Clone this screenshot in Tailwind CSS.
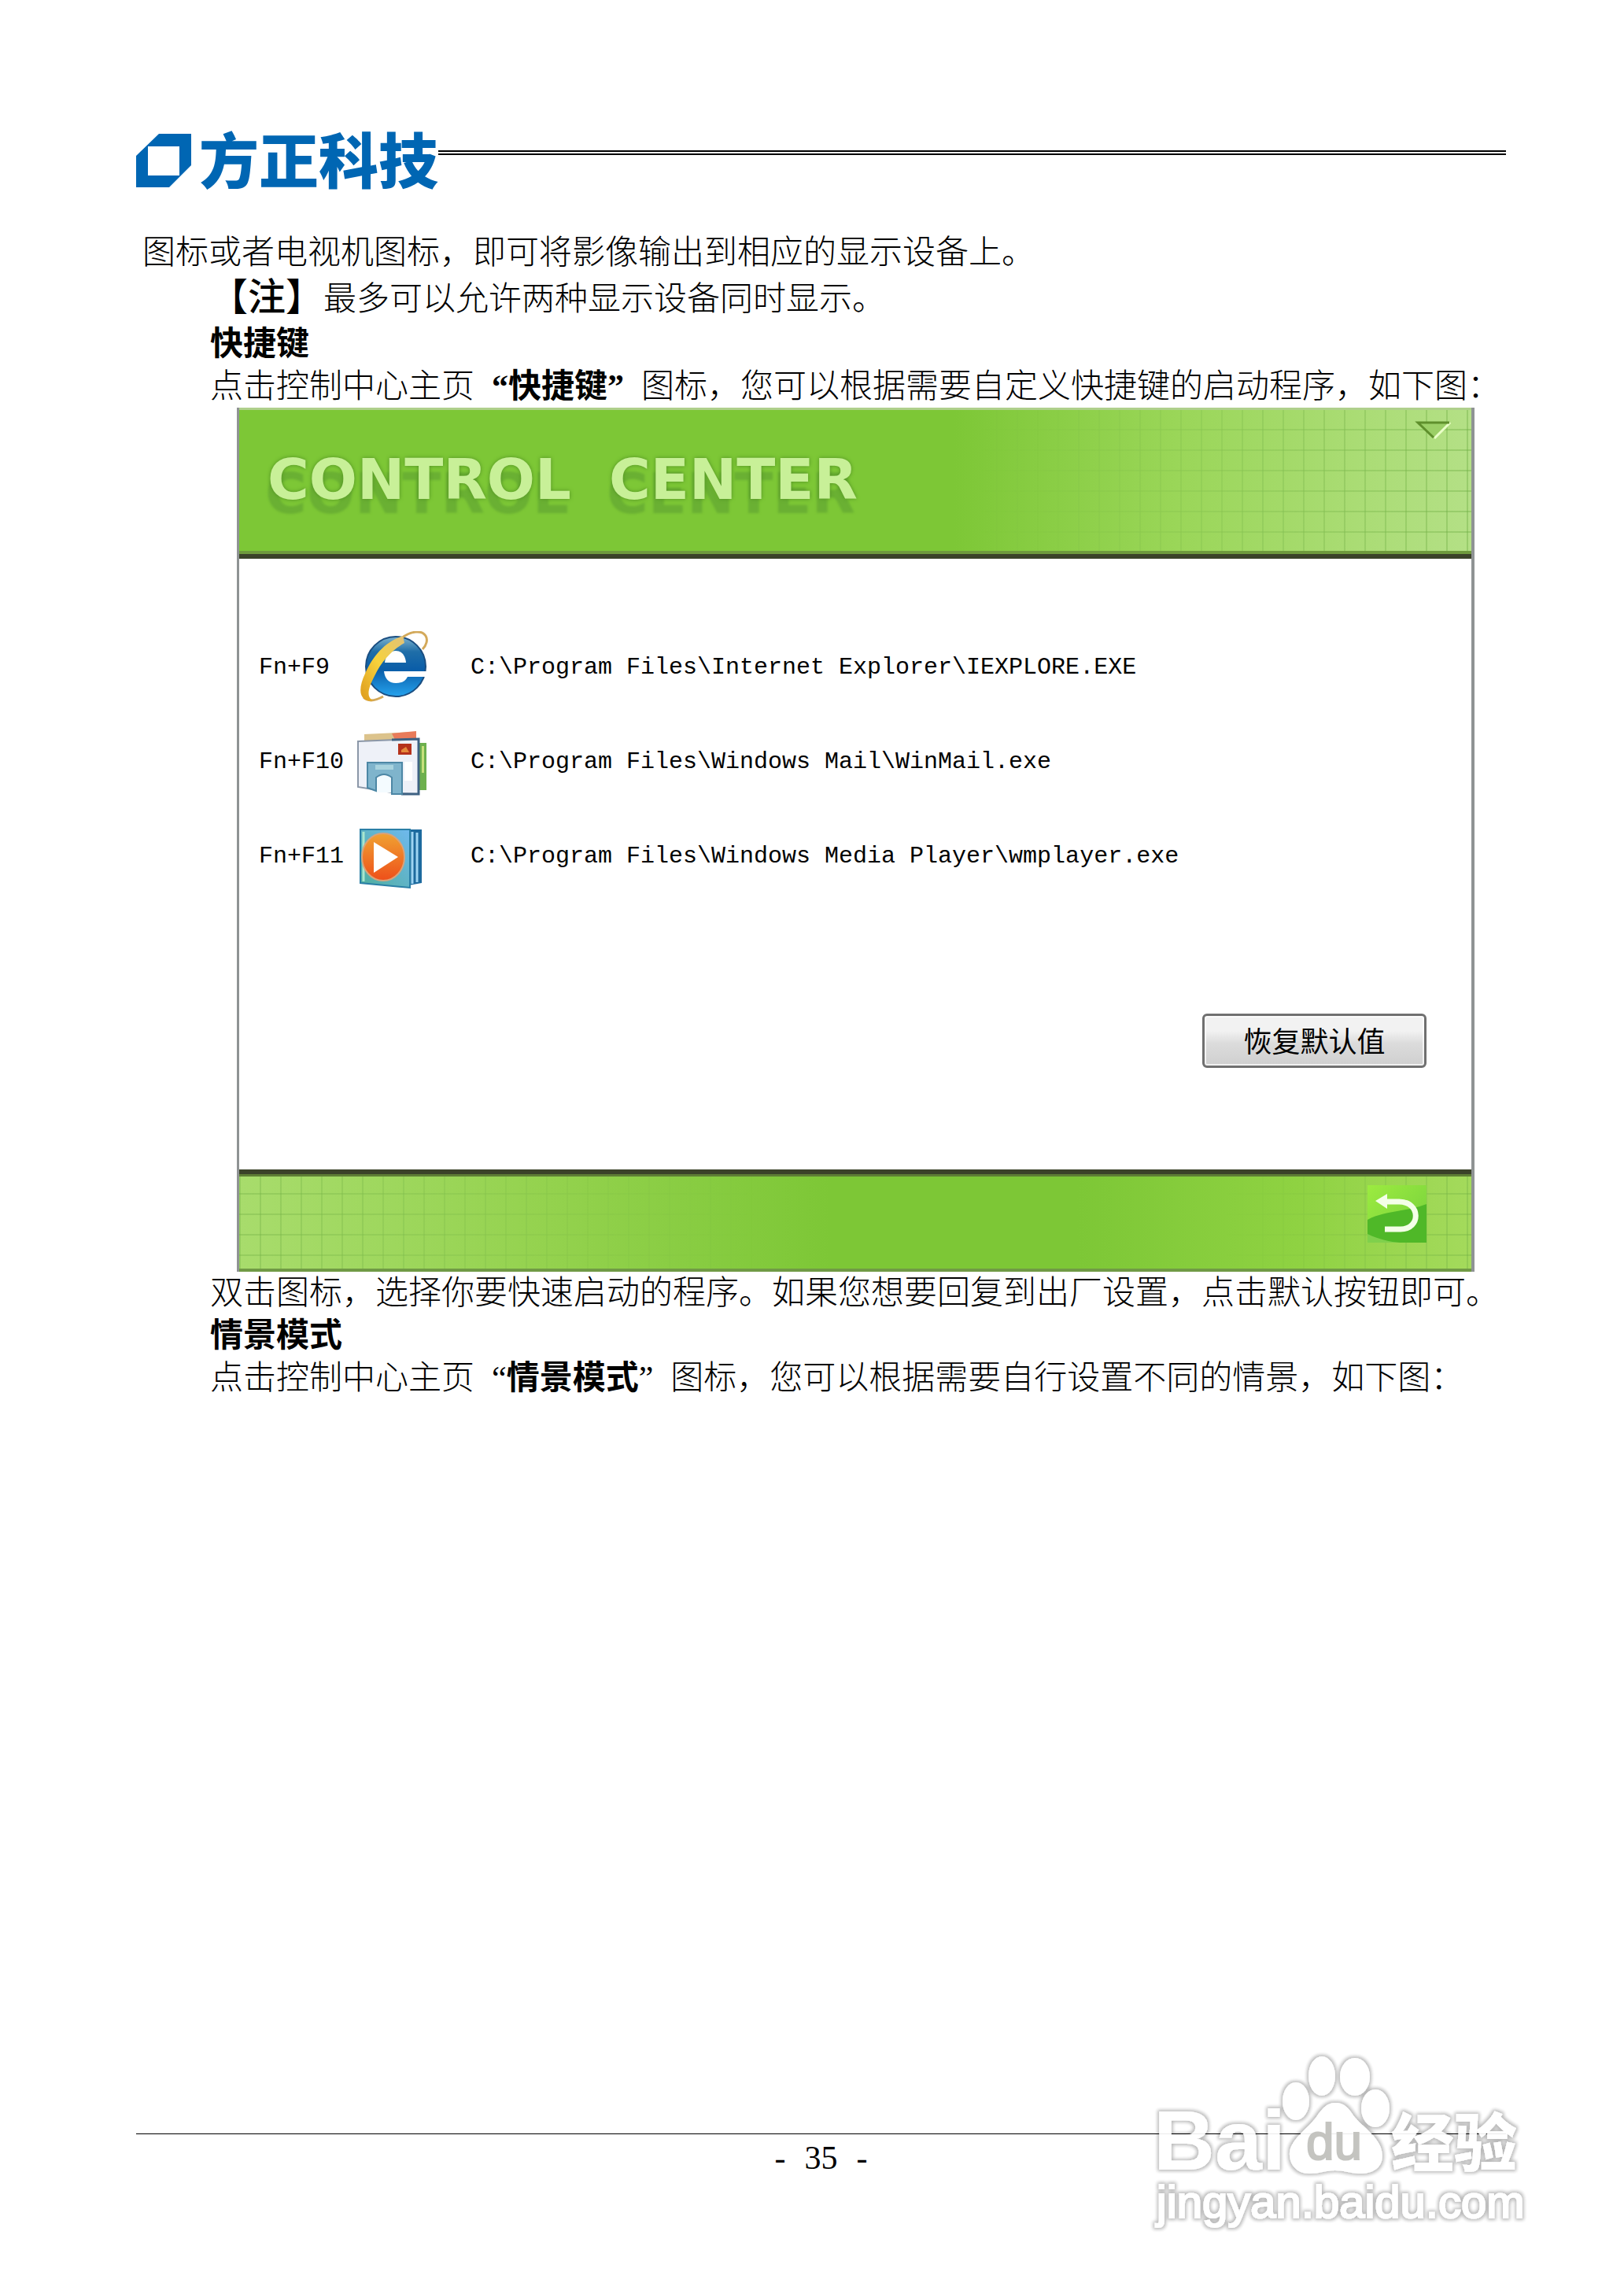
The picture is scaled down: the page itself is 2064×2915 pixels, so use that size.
<!DOCTYPE html>
<html lang="zh-CN">
<head>
    <meta charset="UTF-8">
    <meta name="viewport" content="width=device-width, initial-scale=1.0">
    <title>方正科技 - 快捷键</title>
    <script src="https://cdn.jsdelivr.net/npm/@tailwindcss/browser@4"></script>
</head>
<body class="bg-white text-black font-['Liberation_Serif','Noto_Sans_CJK_SC',serif]">
    <div class="relative min-h-screen flex flex-col pl-[173px] pr-[150px] pt-[156px] pb-[142px]">
        <!-- Page header -->
        <header class="flex h-24 items-center">
            <svg class="w-[70px] h-[68px] shrink-0" viewBox="0 0 70 68" aria-hidden="true">
                <path fill="#0066b3" fill-rule="evenodd" d="M29 0H70V40L42 68H0V28ZM15 16V53H55V16Z"/>
            </svg>
            <span class="ml-2.5 pb-2 text-[76px] leading-none font-black text-[#0066b3] font-['Noto_Sans_CJK_SC',sans-serif]">方正科技</span>
            <div class="flex-1 -mt-5 border-t-6 border-double border-black"></div>
        </header>

        <!-- Manual text -->
        <main class="mt-[42px] pl-2 text-[42px] leading-[54px] font-light">
            <p>图标或者电视机图标，即可将影像输出到相应的显示设备上。</p>
            <p class="pl-[86px] leading-[60px]"><strong class="text-5xl leading-[60px] font-medium">【注】</strong>最多可以允许两种显示设备同时显示。</p>
            <h2 class="pl-[86px] font-bold">快捷键</h2>
            <p class="pl-[86px]">点击控制中心主页<strong class="mx-[22px] font-bold">“快捷键”</strong>图标，您可以根据需要自定义快捷键的启动程序，如下图：</p>

            <!-- Control center window -->
            <section class="ml-[120px] mr-10 border-l-3 border-r-4 border-[#8f9394] font-normal">
                <div class="relative flex h-48 items-center border-t-3 border-b-6 border-t-[#afd08c] border-b-[#3b4229] pl-9 pb-2 bg-[linear-gradient(90deg,#7dc736_0%,#7dc736_58%,#9ad658_76%,#b4e086_100%)]">
                    <div class="absolute inset-0 bg-[linear-gradient(90deg,#6fae4466_2px,transparent_2px),linear-gradient(0deg,#6fae4466_2px,transparent_2px)] bg-[size:26px_26px] [mask-image:linear-gradient(90deg,transparent_60%,black_100%)]"></div>
                    <div class="absolute inset-x-0 bottom-0 h-1 bg-[#6f9a3d]"></div>
                    <h3 class="relative flex gap-12 text-7xl leading-none font-bold text-[#c8f098] font-['DejaVu_Sans',sans-serif] [text-shadow:0_0_5px_#4f8f22,-3px_18px_3px_#6ab033]"><span>CONTROL</span> <span>CENTER</span></h3>
                    <button type="button" aria-label="最小化" class="absolute right-6 top-3">
                        <svg class="w-12 h-7" viewBox="0 0 48 28">
                            <path fill="#9bcf66" d="M4 4H44L24 23Z"/>
                            <path fill="none" stroke="#eaffc8" stroke-width="3" d="M45 4L25 24"/>
                            <path fill="none" stroke="#5f8f2c" stroke-width="3" d="M24 23L4 4H44"/>
                        </svg>
                    </button>
                </div>

                <div class="pt-[78px] pb-[129px] pl-[25px] pr-[57px]">
                    <ul class="text-[30px] leading-none font-['Liberation_Mono',monospace]">
                        <li class="grid grid-cols-[125px_144px_1fr] h-[120px] items-center">
                            <span>Fn+F9</span>
                            <button type="button" aria-label="Internet Explorer">
                                <svg class="size-[92px]" viewBox="0 0 92 92">
                                    <defs>
                                        <linearGradient id="ie" x1="0" y1="0" x2="0" y2="1">
                                            <stop offset="0" stop-color="#7fb4cf"/>
                                            <stop offset=".25" stop-color="#1f6ea8"/>
                                            <stop offset=".55" stop-color="#0a5da8"/>
                                            <stop offset="1" stop-color="#25a3ee"/>
                                        </linearGradient>
                                        <linearGradient id="gold" x1="1" y1="0" x2="0" y2="1">
                                            <stop offset="0" stop-color="#e0c27a"/>
                                            <stop offset=".5" stop-color="#f7d23c"/>
                                            <stop offset="1" stop-color="#dd9a1c"/>
                                        </linearGradient>
                                    </defs>
                                    <circle cx="49" cy="45" r="38" fill="url(#ie)" stroke="#1a4d80" stroke-width="2"/>
                                    <path fill="#fff" d="M35 40C36 30 42 25 49 25S61 30 62 40Z"/>
                                    <path fill="#fff" d="M34 51H90V58H64C61 64 56 66 49 66C40 66 35 60 34 51Z"/>
                                    <path fill="none" stroke="#d3a95a" stroke-width="3" d="M56 9C68 0 82 -2 87 6C90 11 88 18 83 23M8 84C15 91 24 88 33 83"/>
                                    <path fill="url(#gold)" d="M58 6C36 13 20 31 10 54C3 69 2 81 9 86C13 89 17 89 20 88C11 84 14 72 22 57C31 38 44 24 60 15Z"/>
                                </svg>
                            </button>
                            <span>C:\Program Files\Internet Explorer\IEXPLORE.EXE</span>
                        </li>
                        <li class="grid grid-cols-[125px_144px_1fr] h-[120px] items-center">
                            <span>Fn+F10</span>
                            <button type="button" aria-label="Windows Mail">
                                <svg class="size-[92px]" viewBox="0 0 92 92">
                                    <path fill="#dcc38c" d="M9 11L72 8V30H9Z"/>
                                    <path fill="#e97b5a" d="M44 10L75 7V18H48Z"/>
                                    <path fill="#6db04e" d="M74 22H88V82H74Z"/>
                                    <path fill="#c7e07c" d="M82 26H85V60H82Z"/>
                                    <path fill="#eef1f8" stroke="#8b97a8" stroke-width="2" d="M1 20L78 17V87L50 86L1 78Z"/>
                                    <path fill="none" stroke="#3f6283" stroke-width="3" d="M56 87H78V17L44 18"/>
                                    <path fill="#fff" d="M60 46H70V70H60Z"/>
                                    <rect x="52" y="23" width="17" height="14" fill="#b5321c"/>
                                    <path fill="#e58a3c" d="M56 31L62 27L66 34H56Z"/>
                                    <path fill="#7fb4cc" stroke="#4d87a5" stroke-width="2" d="M13 47H57V87H44V66Q34 58 24 66V83L13 79Z"/>
                                    <path fill="#a9d3de" d="M23 50H46V56H23Z"/>
                                    <path fill="#f4fbff" d="M25 67Q34 60 43 67V85H25Z"/>
                                </svg>
                            </button>
                            <span>C:\Program Files\Windows Mail\WinMail.exe</span>
                        </li>
                        <li class="grid grid-cols-[125px_144px_1fr] h-[120px] items-center">
                            <span>Fn+F11</span>
                            <button type="button" aria-label="Windows Media Player">
                                <svg class="size-[92px]" viewBox="0 2 92 92">
                                    <defs>
                                        <linearGradient id="wmp" x1="1" y1="0" x2="0" y2="1">
                                            <stop offset="0" stop-color="#6fb9ee"/>
                                            <stop offset="1" stop-color="#4fae9c"/>
                                        </linearGradient>
                                        <linearGradient id="disc" x1="0" y1="0" x2="0" y2="1">
                                            <stop offset="0" stop-color="#f0a232"/>
                                            <stop offset="1" stop-color="#ee4f1a"/>
                                        </linearGradient>
                                    </defs>
                                    <path fill="#1d6a9e" d="M60 14H82V82L60 86Z"/>
                                    <path fill="none" stroke="#9ed4f2" stroke-width="3" d="M70 17V83M76 18V81"/>
                                    <path fill="url(#wmp)" stroke="#2a7fa6" stroke-width="2" d="M4 14H67V88L4 82Z"/>
                                    <path fill="none" stroke="#a9e6cf" stroke-width="3" d="M8 17V80"/>
                                    <ellipse cx="33" cy="49" rx="27" ry="30" fill="url(#disc)" stroke="#d9a27a" stroke-width="2"/>
                                    <path fill="#fff" d="M21 30L52 49L21 69Z"/>
                                </svg>
                            </button>
                            <span>C:\Program Files\Windows Media Player\wmplayer.exe</span>
                        </li>
                    </ul>
                    <div class="mt-[140px] flex justify-end">
                        <button type="button" class="w-[285px] h-[69px] pb-1 rounded-md border-3 border-[#707070] bg-linear-to-b from-[#f2f2f2] from-30% via-[#dcdcdc] via-55% to-[#cfcfcf] inset-ring-2 inset-ring-white/70 text-4xl leading-none font-['Noto_Sans_CJK_SC',sans-serif]">恢复默认值</button>
                    </div>
                </div>

                <div class="relative flex h-[130px] items-start justify-end border-t-6 border-b-4 border-t-[#3b4229] border-b-[#709a45] pr-[57px] pt-3.5 bg-[linear-gradient(90deg,#a8dc6c_0%,#94d24e_25%,#7dc736_48%,#7dc736_68%,#8fd242_86%,#a4da5c_100%)]">
                    <div class="absolute inset-0 bg-[linear-gradient(90deg,#6fae4455_2px,transparent_2px),linear-gradient(0deg,#6fae4455_2px,transparent_2px)] bg-[size:26px_26px] [mask-image:linear-gradient(90deg,black_0%,transparent_42%,transparent_80%,black_100%)]"></div>
                    <div class="absolute inset-x-0 top-0 h-[3px] bg-[#5e7d35]"></div>
                    <button type="button" aria-label="返回" class="relative">
                        <svg class="w-[75px] h-[73px]" viewBox="0 0 75 73">
                            <defs>
                                <linearGradient id="back" x1="0" y1="0" x2="1" y2="1">
                                    <stop offset="0" stop-color="#9ceb40"/>
                                    <stop offset="1" stop-color="#74cf3c"/>
                                </linearGradient>
                            </defs>
                            <rect width="75" height="73" fill="url(#back)"/>
                            <path fill="#4fb828" d="M0 44C22 32 50 34 75 24V73H0Z"/>
                            <path fill="#7fd04c" d="M0 62C24 74 50 74 60 73H0Z"/>
                            <path fill="none" stroke="#f4ffe8" stroke-width="7" d="M20 21H40C68 21 68 56 42 56H22"/>
                            <path fill="#f4ffe8" d="M10 20L25 11V30Z"/>
                        </svg>
                    </button>
                </div>
            </section>

            <p class="pl-[86px]">双击图标，选择你要快速启动的程序。如果您想要回复到出厂设置，点击默认按钮即可。</p>
            <h2 class="pl-[86px] font-bold">情景模式</h2>
            <p class="pl-[86px]">点击控制中心主页<span class="mx-[22px]">“<strong class="font-bold">情景模式</strong>”</span>图标，您可以根据需要自行设置不同的情景，如下图：</p>
        </main>

        <!-- Page footer -->
        <footer class="mt-auto flex justify-center gap-6 border-t border-black pt-1 pb-1 text-[42px] leading-[53px]">
            <span>-</span>
            <span>35</span>
            <span>-</span>
        </footer>

        <!-- Watermark over the footer rule -->
        <svg class="absolute right-[116px] bottom-[68px] w-[488px] h-[250px]" viewBox="0 0 488 250">
            <defs>
                <filter id="glow" x="-5%" y="-5%" width="110%" height="110%">
                    <feMorphology in="SourceAlpha" operator="dilate" radius="2"/>
                    <feGaussianBlur stdDeviation="2"/>
                    <feComponentTransfer result="halo"><feFuncA type="linear" slope=".3"/></feComponentTransfer>
                    <feMerge>
                        <feMergeNode in="halo"/>
                        <feMergeNode in="SourceGraphic"/>
                    </feMerge>
                </filter>
            </defs>
            <g fill="#fff" filter="url(#glow)" opacity=".92">
                <text x="6" y="160" font-size="108" font-weight="700" font-family="Liberation Sans, sans-serif">Bai</text>
                <ellipse cx="187" cy="73" rx="17" ry="24"/>
                <ellipse cx="220" cy="41" rx="17" ry="25"/>
                <ellipse cx="262" cy="42" rx="19" ry="24"/>
                <ellipse cx="288" cy="82" rx="18" ry="24"/>
                <path d="M237 75C249 75 254 82 260 91C272 107 296 119 297 142C297 158 284 166 266 165C254 164 248 161 237 161C224 161 218 165 204 165C188 165 178 153 179 138C181 121 201 109 213 93C220 83 226 75 237 75Z"/>
                <text x="308" y="155" font-size="80" font-weight="900" font-family="Noto Sans CJK SC, sans-serif">经验</text>
                <text x="10" y="221" font-size="58" stroke="#fff" stroke-width="2" font-family="Liberation Sans, sans-serif">jingyan.baidu.com</text>
            </g>
            <text x="200" y="147" font-size="64" fill="#c4c4c0" stroke="#c4c4c0" stroke-width="2" font-family="Liberation Sans, sans-serif">du</text>
        </svg>
    </div>
</body>
</html>
